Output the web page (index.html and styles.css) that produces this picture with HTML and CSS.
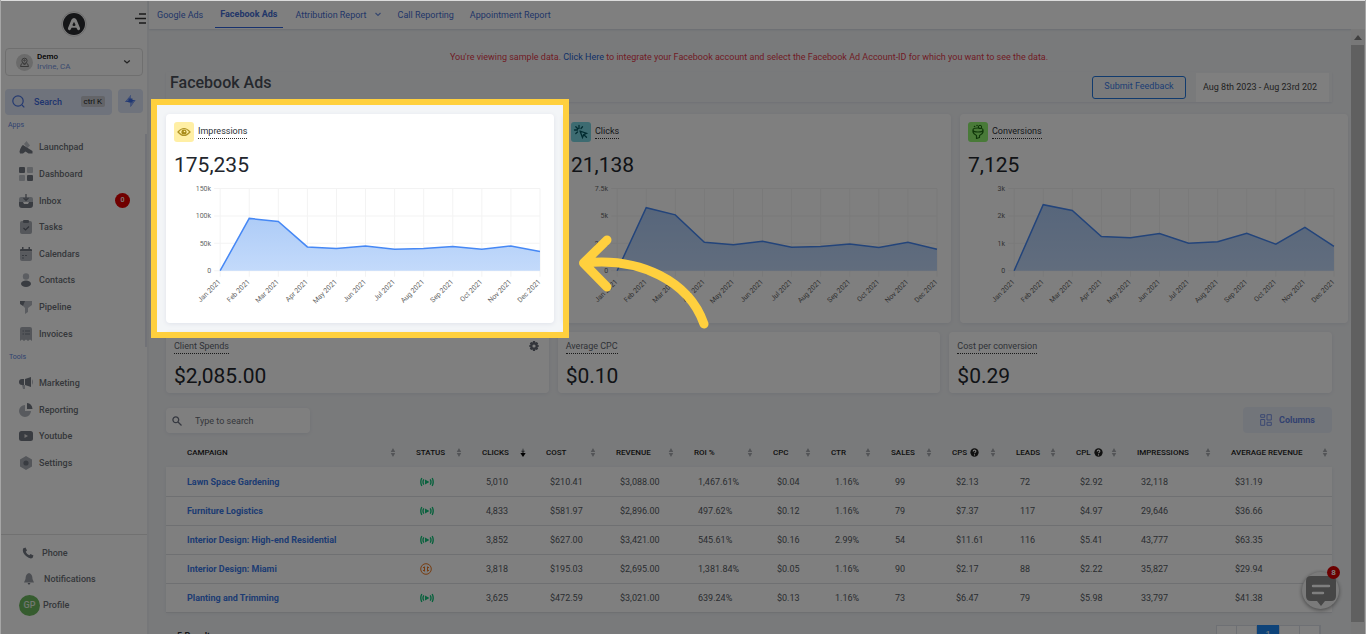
FILE: index.html
```html
<!DOCTYPE html>
<html lang="en">
<head>
<meta charset="utf-8">
<title>Facebook Ads</title>
<link rel="stylesheet" href="styles.css">
</head>
<body>
<svg class="defs" aria-hidden="true">
  <defs>
    <linearGradient id="area" x1="0" y1="0" x2="0" y2="1"><stop offset="0" stop-color="#aeccf7"/><stop offset="1" stop-color="#c3dafb"/></linearGradient>
    <symbol id="sort" viewBox="0 0 6 10"><path d="M3 0 5.500 4.500h-5zM3 10 .5 5.500h5z"/></symbol>
    <symbol id="help" viewBox="0 0 10 10"><circle cx="5" cy="5" r="4.600" fill="#222"/><path d="M3.500 3.900c0-2 3-2 3-.2 0 1.100-1.500 1.100-1.500 2.200M5 7v1.200" fill="none" stroke="#fff" stroke-width="1.200"/></symbol>
    <symbol id="live" viewBox="0 0 14 10"><path d="M5 2.500v5l4.500-2.500z" fill="#14c47c"/><path d="M3.800 2.300q-1.600 2.700 0 5.400M10.200 2.300q1.600 2.700 0 5.400M1.800 1q-2 4 0 8M12.200 1q2 4 0 8" fill="none" stroke="#14c47c" stroke-width="1.400"/></symbol>
  </defs>
</svg>
<div class="app">
  <aside class="sidebar">
    <div class="brand">
      <svg class="logo" viewBox="0 0 26 26"><circle cx="13" cy="13" r="12.300" fill="#fff" stroke="#ccc" stroke-width=".7"/><circle cx="13" cy="13" r="11" fill="#2b2c31"/><path d="M8.500 17.500 11.800 9.500q1.200-2 2.400 0l3.300 8" fill="none" stroke="#fff" stroke-width="3.200" stroke-linejoin="round" stroke-linecap="round"/><path d="M10 15.500h6" stroke="#fff" stroke-width="2.400"/><circle cx="13" cy="13.700" r="1.300" fill="#2b2c31"/></svg>
      <button class="menu" aria-label="Toggle menu"><svg viewBox="0 0 11 11"><path d="M4 1h7M0 5.500h11M4 10h7" stroke="#333" stroke-width="1.300"/></svg></button>
    </div>
    <button class="account">
      <svg class="account-pic" viewBox="0 0 17 17"><circle cx="8.500" cy="8.500" r="8.500" fill="#d6d6d6"/><g fill="none" stroke="#666" stroke-width=".9"><circle cx="8.500" cy="6.800" r="2.600"/><circle cx="8.500" cy="6.500" r=".7"/><path d="M6.500 8.800 8.500 11l2-2.200M5.500 9.500l-1 3h8l-1-3"/></g></svg>
      <span class="account-text"><b>Demo</b><span>Irvine, CA</span></span>
      <svg class="caret" viewBox="0 0 8 6"><path d="m1.200 1.500 2.800 2.500 2.800-2.500" fill="none" stroke="#444" stroke-width="1.300"/></svg>
    </button>
    <div class="quick">
      <button class="search"><svg viewBox="0 0 13 13"><circle cx="6" cy="6" r="5.200"/><path d="m10 10 2.300 2.300"/></svg><b>Search</b><kbd>ctrl K</kbd></button>
      <button class="bolt" aria-label="Quick actions"><svg viewBox="0 0 11 12"><path d="M6 0v5h4.500L5.500 12V7H0z" fill="#3f6fe6"/><path d="M6 0v5L0 7zM5.500 12V7l5-2z" fill="#8aa7f2"/><path d="M3.500 3.500h4v4h-4z" fill="#3f6fe6"/></svg></button>
    </div>
    <h2 class="group">Apps</h2>
    <ul class="nav nav-apps">
      <li><a href="#"><svg viewBox="0 0 14 14"><path d="m5 4 2.500-3L11 5.500 8.500 8z" fill="#c2c6cd"/><path d="M.5 11.500Q2 6 4 5l9.500 6v2.500h-4l-3-2-2.500 2H1z"/></svg>Launchpad</a></li>
      <li><a href="#"><svg viewBox="0 0 14 14"><rect width="6" height="6" rx="1"/><rect x="8" width="6" height="6" rx="1" fill="#c2c6cd"/><rect y="8" width="6" height="6" rx="1" fill="#c2c6cd"/><rect x="8" y="8" width="6" height="6" rx="1"/></svg>Dashboard</a></li>
      <li><a href="#"><svg viewBox="0 0 14 14"><path d="M0 5q0-2 2-2h10q2 0 2 2v3H0z" fill="#b5bac2"/><path d="M0 8h4l1 2h4l1-2h4v3q0 3-3 3H3q-3 0-3-3z"/><path d="M7 0v6M4.500 4 7 6.500 9.500 4" fill="none" stroke="#6b707b" stroke-width="1.200"/></svg>Inbox<span class="count">0</span></a></li>
      <li><a href="#"><svg viewBox="0 0 14 14"><rect x="1" y="1" width="12" height="13" rx="2" fill="#aaaeb6"/><rect x="4" width="6" height="3" rx="1"/><path d="m4.500 8 2 2 3.500-3.500" fill="none" stroke="#5f646f" stroke-width="1.200"/></svg>Tasks</a></li>
      <li><a href="#"><svg viewBox="0 0 14 14"><path d="M1 5h12v7q0 2-2 2H3q-2 0-2-2z" fill="#b0b4bc"/><path d="M1 4.500V3q0-1 1-1h1V0h1.500v2h5V0H11v2h1q1 0 1 1v1.500zM3 8h2v1H3zM6 8h2v1H6zM3 10.500h2v1H3z"/></svg>Calendars</a></li>
      <li><a href="#"><svg viewBox="0 0 14 14"><circle cx="7" cy="3.500" r="3.200" fill="#b8bcc4"/><ellipse cx="7" cy="10.700" rx="5" ry="3.200"/></svg>Contacts</a></li>
      <li><a href="#"><svg viewBox="0 0 14 14"><path d="M4 1h9v4L9 8v4l-3 2V8L4 6z" fill="#b5b9c1"/><path d="M1 1h5L4 6 1 4z"/></svg>Pipeline</a></li>
      <li><a href="#"><svg viewBox="0 0 14 14"><path d="M1 2q0-2 2-2h8q2 0 2 2v12l-2-1.500L9 14l-2-1.500L5 14l-2-1.500L1 14z" fill="#a9adb5"/><path d="M3.500 3.500H5v1H3.500zM6 3.500h5v1H6zM3.500 6.500H5v1H3.500zM6 6.500h5v1H6z"/></svg>Invoices</a></li>
    </ul>
    <h2 class="group">Tools</h2>
    <ul class="nav nav-tools">
      <li><a href="#"><svg viewBox="0 0 14 14"><path d="M6 3 12 1v10L6 9z"/><path d="M0 6q0-3 3-3h2v6H3Q0 9 0 6z"/><path d="M3 9h3v4H4zM13 3q2 3 0 6" fill="#b5b9c1"/></svg>Marketing</a></li>
      <li><a href="#"><svg viewBox="0 0 14 14"><path d="M6 2v6h6a6 6 0 1 1-6-6z" fill="#b0b4bc"/><path d="M8 0q5 .500 5.500 6H8z"/></svg>Reporting</a></li>
      <li><a href="#"><svg viewBox="0 0 14 14"><rect y="2" width="14" height="10" rx="2.500"/><path d="m5.500 5 3.500 2-3.500 2z" fill="#ddd"/></svg>Youtube</a></li>
      <li><a href="#"><svg viewBox="0 0 14 14"><path d="m7 0 6 3.500v7L7 14l-6-3.500v-7z" fill="#a9adb5"/><circle cx="7" cy="7" r="2.600"/></svg>Settings</a></li>
    </ul>
    <ul class="nav nav-user">
      <li><a href="#"><svg viewBox="0 0 12 12"><path d="M1 1.500 3.500.5l1.500 3-1.300 1.200q1 2.400 3.600 3.600L8.500 7l3 1.500-1 2.500Q8 12.500 4 9T1 1.500z"/></svg>Phone</a></li>
      <li><a class="wide" href="#"><svg viewBox="0 0 12 12"><path d="M6 0q3.500 1 3.500 6l1.500 3.500H1L2.500 6Q2.500 1 6 0z" fill="#999da5"/><path d="M4.500 10h3L6 12z"/></svg>Notifications</a></li>
      <li><a class="profile" href="#"><span class="avatar">GP</span>Profile</a></li>
    </ul>
  </aside>

  <div class="main">
    <nav class="tabs">
      <a href="#">Google Ads</a>
      <a href="#" class="active">Facebook Ads</a>
      <a href="#">Attribution Report <svg viewBox="0 0 8 6"><path d="m1.500 1 2.500 2.500 2.500-2.500" fill="none" stroke="#6f90de" stroke-width="1.200"/></svg></a>
      <a href="#">Call Reporting</a>
      <a href="#">Appointment Report</a>
    </nav>
    <div class="scroller">
      <main class="content">
        <p class="notice">You're viewing sample data. <a href="#">Click Here</a> to integrate your Facebook account and select the Facebook Ad Account-ID for which you want to see the data.</p>
        <header class="title-bar">
          <h1>Facebook Ads</h1>
          <button class="feedback">Submit Feedback</button>
          <input class="dates" type="text" aria-label="Date range" value="Aug 8th 2023 - Aug 23rd 202">
        </header>

        <section class="charts">
          <article class="card chart-card">
            <h3><svg class="badge yellow" viewBox="0 0 20 20"><path d="M4 10q6-7 12 0-6 7-12 0z" fill="none" stroke="#b09425" stroke-width="1.200"/><circle cx="10" cy="10" r="2.600" fill="#a88b1a"/><circle cx="10.500" cy="9.500" r=".8" fill="#fff0a8"/></svg><span>Impressions</span></h3>
            <p class="value">175,235</p>
            <svg class="chart" viewBox="0 0 370 130" data-ticks="0,50k,100k,150k" data-max="150" data-values="0,95.5,90,43.5,40.5,45.3,39.3,40.5,44.2,39.3,45.3,35"></svg>
            <div class="spotlight"></div>
            <svg class="arrow" viewBox="574 230 140 104"><path d="M607 240 583.500 263 607 287M584 263C640 257 689 281 704 324"/></svg>
          </article>
          <article class="card chart-card">
            <h3><svg class="badge teal" viewBox="0 0 20 20"><path d="m9 9 6.500 2.400-2.700 1.200 2.700 2.700M9 9l2.500 6.500 1.200-2.700M8 3.500v3M3.500 8h3M4.800 4.800l2 2M11.500 4.800 10 6.500M4.800 11.500l1.700-1.500" fill="none" stroke="#075863" stroke-width="1.300" stroke-linecap="round"/></svg><span>Clicks</span></h3>
            <p class="value">21,138</p>
            <svg class="chart" viewBox="0 0 370 130" data-ticks="0,2.5k,5k,7.5k" data-max="7.5" data-values="0,5.75,5.1,2.6,2.36,2.7,2.15,2.2,2.45,2.13,2.6,1.97"></svg>
          </article>
          <article class="card chart-card">
            <h3><svg class="badge green" viewBox="0 0 20 20"><path d="M5 8q0-2 5-2t5 2-5 2-5-2v2q.5 2 3.500 3.500v3l3-1V13.500Q14.500 12 15 10V8" fill="none" stroke="#1d6a10" stroke-width="1.200" stroke-linejoin="round"/><circle cx="12" cy="5" r="1.700" fill="none" stroke="#1d6a10"/><path d="M6.500 4.500h.1M9 3.500h.1" stroke="#1d6a10" stroke-width="1.500" stroke-linecap="round"/></svg><span>Conversions</span></h3>
            <p class="value">7,125</p>
            <svg class="chart" viewBox="0 0 370 130" data-ticks="0,1k,2k,3k" data-max="3" data-values="0,2.41,2.2,1.25,1.2,1.36,1,1.06,1.37,0.97,1.58,0.89"></svg>
          </article>
        </section>

        <section class="stats">
          <article class="card stat"><h3><span>Client Spends</span><button aria-label="Edit client spends"><svg viewBox="0 0 10 10"><path d="M4 0h2l.4 1.500 1.500-.6L9.200 2.400 8.400 4 10 4.500v1L8.400 6l.8 1.600-1.300 1.500-1.500-.6L6 10H4l-.4-1.500-1.500.6L.8 7.600 1.600 6 0 5.500v-1L1.600 4 .8 2.400 2.100.9l1.500.6zM5 3.400a1.600 1.600 0 1 0 0 3.200 1.600 1.600 0 1 0 0-3.200z" fill="#666b76" fill-rule="evenodd"/></svg></button></h3><p class="value">$2,085.00</p></article>
          <article class="card stat"><h3><span>Average CPC</span></h3><p class="value">$0.10</p></article>
          <article class="card stat"><h3><span>Cost per conversion</span></h3><p class="value">$0.29</p></article>
        </section>

        <div class="toolbar">
          <label class="filter card"><svg viewBox="0 0 10 10"><circle cx="3.800" cy="3.800" r="2.900"/><path d="m6 6 3.500 3.500"/></svg><input type="text" placeholder="Type to search" aria-label="Type to search"></label>
          <button class="columns"><svg viewBox="0 0 12 12"><path d="M.7.700h4v2.600h-4zM.7 5.500h4v5.800h-4zM7 .7h4.300v5.300H7zM7 8.300h4.300v3H7z"/></svg>Columns</button>
        </div>

        <table class="campaigns">
          <colgroup><col class="w238"><col class="w66"><col class="w64"><col class="w70"><col class="w78"><col class="w79"><col class="w58"><col class="w60"><col class="w61"><col class="w64"><col class="w60"><col class="w61"><col class="w94"><col class="w113"></colgroup>
          <thead><tr>
            <th><div>Campaign<svg><use href="#sort"/></svg></div></th>
            <th><div>Status<svg><use href="#sort"/></svg></div></th>
            <th><div>Clicks<svg viewBox="0 0 6 10"><path d="M3 0 5.500 4.500h-5z"/><path d="M3 10 0 5.500h6z" fill="#000"/><path d="M2.500 3h1v3h-1z" fill="#000"/></svg></div></th>
            <th><div>Cost<svg><use href="#sort"/></svg></div></th>
            <th><div>Revenue<svg><use href="#sort"/></svg></div></th>
            <th><div>ROI %<svg><use href="#sort"/></svg></div></th>
            <th><div>CPC<svg><use href="#sort"/></svg></div></th>
            <th><div>CTR<svg><use href="#sort"/></svg></div></th>
            <th><div>Sales<svg><use href="#sort"/></svg></div></th>
            <th><div>CPS<svg class="help"><use href="#help"/></svg><svg><use href="#sort"/></svg></div></th>
            <th><div>Leads<svg><use href="#sort"/></svg></div></th>
            <th><div>CPL<svg class="help"><use href="#help"/></svg><svg><use href="#sort"/></svg></div></th>
            <th><div>Impressions<svg><use href="#sort"/></svg></div></th>
            <th class="last"><div>Average Revenue<svg><use href="#sort"/></svg></div></th>
          </tr></thead>
          <tbody>
            <tr><td><a href="#">Lawn Space Gardening</a></td><td><svg class="state" role="img" aria-label="Active"><use href="#live"/></svg></td><td>5,010</td><td>$210.41</td><td>$3,088.00</td><td>1,467.61%</td><td>$0.04</td><td>1.16%</td><td>99</td><td>$2.13</td><td>72</td><td>$2.92</td><td>32,118</td><td>$31.19</td></tr>
            <tr><td><a href="#">Furniture Logistics</a></td><td><svg class="state" role="img" aria-label="Active"><use href="#live"/></svg></td><td>4,833</td><td>$581.97</td><td>$2,896.00</td><td>497.62%</td><td>$0.12</td><td>1.16%</td><td>79</td><td>$7.37</td><td>117</td><td>$4.97</td><td>29,646</td><td>$36.66</td></tr>
            <tr><td><a href="#">Interior Design: High-end Residential</a></td><td><svg class="state" role="img" aria-label="Active"><use href="#live"/></svg></td><td>3,852</td><td>$627.00</td><td>$3,421.00</td><td>545.61%</td><td>$0.16</td><td>2.99%</td><td>54</td><td>$11.61</td><td>116</td><td>$5.41</td><td>43,777</td><td>$63.35</td></tr>
            <tr><td><a href="#">Interior Design: Miami</a></td><td><svg class="state paused" role="img" aria-label="Paused" viewBox="0 0 12 12"><circle cx="6" cy="6" r="5.300"/><path d="M4.500 3.500v5M7.500 3.500v5M3 4.500h1.500M3 7.500h1.500M7.500 4.500H9M7.500 7.500H9"/></svg></td><td>3,818</td><td>$195.03</td><td>$2,695.00</td><td>1,381.84%</td><td>$0.05</td><td>1.16%</td><td>90</td><td>$2.17</td><td>88</td><td>$2.22</td><td>35,827</td><td>$29.94</td></tr>
            <tr><td><a href="#">Planting and Trimming</a></td><td><svg class="state" role="img" aria-label="Active"><use href="#live"/></svg></td><td>3,625</td><td>$472.59</td><td>$3,021.00</td><td>639.24%</td><td>$0.13</td><td>1.16%</td><td>73</td><td>$6.47</td><td>79</td><td>$5.98</td><td>33,797</td><td>$41.38</td></tr>
          </tbody>
        </table>

        <footer class="foot">
          <span>5 Results</span>
          <nav class="pages" aria-label="Pages"><a href="#" aria-label="First"></a><a href="#" aria-label="Previous"></a><a href="#" class="current">1</a><a href="#" aria-label="Next"></a><a href="#" aria-label="Last"></a></nav>
        </footer>
      </main>
      <div class="scrollbar"><svg viewBox="0 0 8 5"><path d="M4 0 8 5H0z" fill="#808080"/></svg><div class="thumb"></div></div>
    </div>
  </div>
  <button class="chat" aria-label="Chat"><svg viewBox="0 0 32 32"><path d="M6 1h20q5 0 5 5v15q0 5-5 5h-6l-4 5-4-5H6q-5 0-5-5V6q0-5 5-5z" fill="#8c8c8c"/><path d="M8 11h16M8 18h10" stroke="#fff" stroke-width="2.400" stroke-linecap="round"/></svg><span>8</span></button>
</div>
<script src="charts.js"></script>
</body>
</html>
```
FILE: styles.css
```css
* { box-sizing: border-box; }
body { margin: 0; background: #a6a6a6; color: #2b2f36; font: 9px/12px Roboto, "Liberation Sans", sans-serif; overflow: hidden; }
h1, h2, h3, p, ul { margin: 0; padding: 0; font-weight: 400; }
ul { list-style: none; }
a { color: inherit; text-decoration: none; }
button, input { font: inherit; color: inherit; margin: 0; padding: 0; border: 0; background: none; }
svg { display: block; flex: none; overflow: visible; }
.defs { position: absolute; width: 0; height: 0; }

.app { position: relative; display: flex; height: 100vh; margin: 0 1px; overflow: hidden; background: #f3f5f7; border-top: 1px solid #dcdcdc; }

/* Sidebar */
.sidebar { display: flex; flex-direction: column; flex: none; width: 148px; background: #fff; border-right: 2px solid #edeff3; }
.brand { display: flex; justify-content: flex-end; padding: 10px 1px 0 0; }
.logo { width: 26px; height: 26px; margin-right: 48px; }
.menu { width: 11px; height: 11px; margin-top: 2px; }
.menu svg { width: 11px; }
.account { display: flex; align-items: center; gap: 4px; height: 28px; margin: 11px 4px 0; padding: 0 11px 0 10px; border: 1px solid #dedede; border-radius: 4px; text-align: left; }
.account-pic { width: 17px; }
.account-text { flex: 1; line-height: 10px; font-size: 8px; }
.account-text b { display: block; color: #000; font-weight: 500; }
.account-text span { color: #7594e0; }
.caret { width: 8px; }
.quick { display: flex; gap: 6px; padding: 13px 4px 0; }
.search { display: flex; flex: 1; align-items: center; height: 26px; padding: 0 7px 1px; border-radius: 4px; background: #dee6f8; color: #3f6ade; }
.search svg { width: 13px; fill: none; stroke: #4a74e0; stroke-width: 1.2; }
.search b { flex: 1; padding-left: 9px; text-align: left; font-weight: 500; }
.search kbd { padding: 0 3px; border-radius: 2px; background: #c6c9d1; color: #222; font: 8px/11px Roboto, sans-serif; }
.bolt { display: grid; place-items: center; width: 25px; height: 24px; border-radius: 4px; background: #dee6f8; }
.bolt svg { width: 11px; }
.group { padding: 5px 0 0 7px; color: #6286df; font-size: 7px; line-height: 10px; }
.nav-apps + .group { padding-left: 8px; }
.nav { display: flex; flex-direction: column; }
.nav li { display: flex; flex: 1; }
.nav a { display: flex; flex: 1; align-items: center; gap: 6px; padding-left: 18px; color: #6b6f76; font-weight: 500; }
.nav svg { width: 14px; height: 14px; fill: #737883; }
.nav-apps { min-height: 213px; margin-top: 4px; border-right: 2px solid #e2e5ee; }
.nav-tools { min-height: 106px; margin-top: 8px; }
.count { margin-left: auto; margin-right: 15px; width: 15px; border-radius: 50%; background: #e00000; color: #fff; font-size: 7px; line-height: 15px; text-align: center; }
.nav-user { min-height: 100px; margin-top: auto; padding: 5px 0 16px; border-top: 1px solid #e2e2e2; }
.nav-user a { gap: 8px; padding-left: 21px; }
.nav-user svg { width: 12px; height: 12px; }
.nav-user .wide { gap: 9px; padding-left: 22px; }
.nav-user .profile { gap: 3px; padding-left: 18px; }
.avatar { width: 21px; border-radius: 50%; background: #6db95f; color: #e4efe2; line-height: 21px; text-align: center; }

/* Top tabs */
.main { display: flex; flex: 1; flex-direction: column; min-width: 0; }
.tabs { display: flex; flex: none; gap: 12px; height: 28px; padding: 0 8px; background: #fff; color: #456dd2; box-shadow: 0 1px 2px #d3d8e2; }
.tabs a { display: flex; align-items: center; gap: 7px; height: 27px; }
.tabs a + a { margin-right: 4px; }
.tabs svg { width: 8px; }
.tabs .active { margin-right: 0; padding: 0 6px 0 5px; border-bottom: 1px solid #2e63dd; font-weight: 700; }
.scroller { display: flex; flex: 1; }
.content { flex: 1; min-width: 0; padding: 22px 19px 0 17px; }
.notice { color: #e2394a; text-align: center; }
.notice a { color: #1f5fd0; }
.title-bar { display: flex; align-items: center; gap: 10px; height: 30px; margin-top: 9px; padding: 0 3px 0 4px; box-shadow: 0 1px 2px #dde1e9; }
.title-bar h1 { flex: 1; align-self: flex-start; color: #4b515b; font-size: 16px; font-weight: 500; line-height: 22px; }
.feedback { width: 94px; height: 23px; padding-bottom: 2px; border: 1px solid #2277dd; border-radius: 3px; color: #3b7dea; }
.dates { width: 133px; height: 29px; padding: 0 7px; background: #fff; color: #444; }

/* Cards */
.card { background: #fff; border-radius: 4px; box-shadow: 0 1px 4px #dfe3ea; }
.card h3 { font-size: 9px; }
.card h3 span { border-bottom: 1px dotted #333; line-height: 13px; }
.charts, .stats { display: grid; grid-template-columns: repeat(3, 1fr); gap: 9px; }
.charts { margin: 12px -16px 9px 0; }
.chart-card { position: relative; padding: 8px 9px 13px 8px; }
.chart-card h3 { display: flex; align-items: center; gap: 4px; }
.badge { width: 20px; height: 20px; border-radius: 3px; }
.yellow { background: #ffefa5; }
.teal { background: #7ad7e2; }
.green { background: #92f571; }
.value { color: #22262d; font-size: 21px; line-height: 26px; }
.chart-card .value { margin: 10px 0 2px; }
.chart { width: 100%; }
.chart text { fill: #666; font-size: 7px; text-anchor: end; }
.grid { stroke: #f3f3f3; }
.line { fill: none; stroke: #4688f5; stroke-width: 1.5; }
.spotlight { position: absolute; z-index: 5; inset: -15px; border: 6px solid #ffd03e; box-shadow: 0 0 0 2000px rgba(0, 0, 0, .5); pointer-events: none; }
.arrow { position: absolute; z-index: 6; top: 116px; left: calc(100% + 20px); width: 140px; fill: none; stroke: #ffd03e; stroke-width: 9; stroke-linecap: round; stroke-linejoin: round; pointer-events: none; }
.stat { padding: 8px 8px 4px; }
.stat h3 { display: flex; justify-content: space-between; height: 14px; color: #61666f; }
.stat .value { margin-top: 9px; }
.stat button { width: 10px; height: 10px; margin: 1px 2px 0 0; }

/* Toolbar and table */
.toolbar { display: flex; justify-content: space-between; margin: 14px 0 2px; }
.filter { display: flex; align-items: center; gap: 13px; width: 144px; height: 25px; margin-top: 1px; padding: 0 6px; }
.filter svg { width: 10px; fill: none; stroke: #6b7180; stroke-width: 1.3; }
.filter input { flex: 1; min-width: 0; }
.filter input::placeholder { color: #6b6f77; opacity: 1; }
.columns { display: flex; align-items: center; justify-content: center; gap: 7px; width: 89px; height: 26px; border-radius: 4px; background: #e5eaf5; color: #6583e0; font-weight: 700; }
.columns svg { width: 12px; fill: none; stroke: #7690e3; }
.campaigns { width: 100%; table-layout: fixed; border-collapse: collapse; white-space: nowrap; }
.campaigns th { height: 32px; padding: 3px 8px 0 12px; color: #222; font-size: 8px; font-weight: 500; text-transform: uppercase; }
.campaigns th.last { padding-right: 4px; }
.campaigns th:first-child, .campaigns td:first-child { padding-left: 21px; }
.campaigns th div { display: flex; align-items: center; gap: 3px; }
.campaigns th svg { width: 6px; height: 9px; margin-left: auto; fill: #a6a9af; }
.campaigns th .help { width: 9px; margin-left: 0; }
.campaigns tbody { background: #fff; box-shadow: 0 1px 4px #dfe3ea; }
.campaigns td { height: 29px; padding: 0 0 0 16px; border-bottom: 1px solid #dee0e4; color: #555a62; }
.campaigns td a { color: #3b78e6; font-weight: 700; }
.state { width: 14px; height: 10px; }
.paused { width: 12px; height: 12px; fill: none; stroke: #ee7b25; }
.w238 { width: 238px; } .w66 { width: 66px; } .w64 { width: 64px; } .w70 { width: 70px; } .w78 { width: 78px; }
.w79 { width: 79px; } .w58 { width: 58px; } .w60 { width: 60px; } .w61 { width: 61px; } .w94 { width: 94px; } .w113 { width: 113px; }
.foot { display: flex; justify-content: space-between; padding: 12px 11px 0; }
.foot > span { padding-top: 5px; font-weight: 700; }
.pages { display: flex; height: 23px; border: 1px solid #dde1e9; background: #fff; text-align: center; line-height: 21px; }
.pages a { width: 20px; border-right: 1px solid #dde1e9; color: #3b64cf; }
.pages .current { width: 23px; margin-top: -1px; background: #1c87f2; color: #fff; }

/* Scrollbar and chat launcher */
.scrollbar { width: 14px; padding: 6px 1px 26px 0; display: flex; flex-direction: column; align-items: center; gap: 5px; background: #f1f1f1; }
.scrollbar svg { width: 8px; }
.thumb { flex: 1; width: 13px; background: #c1c1c1; }
.chat { position: absolute; right: 26px; bottom: 25px; display: grid; place-items: center; width: 37px; height: 37px; border-radius: 50%; background: #f4f4f4; box-shadow: 0 1px 4px #888; }
.chat svg { width: 32px; }
.chat span { position: absolute; top: -6px; right: -1px; width: 13px; border-radius: 50%; background: #d80000; color: #fff; font-size: 8px; font-weight: 700; line-height: 13px; }
```
FILE: charts.js
```js
const months = ["Jan", "Feb", "Mar", "Apr", "May", "Jun", "Jul", "Aug", "Sep", "Oct", "Nov", "Dec"];
const left = 46, right = 365, top_ = 8.5, bottom = 90.5;

document.querySelectorAll(".chart").forEach(svg => {
  const values = svg.dataset.values.split(",").map(Number);
  const ticks = svg.dataset.ticks.split(",");
  const x = i => left + (right - left) * i / 11;
  const y = v => bottom - (bottom - top_) * v / svg.dataset.max;
  let out = "";
  ticks.forEach((t, i) => {
    const ty = bottom - (bottom - top_) * i / 3;
    out += `<path class="grid" d="M${left - 6} ${ty}H${right}"/><text x="37" y="${ty + 2.5}">${t}</text>`;
  });
  months.forEach((m, i) => {
    out += `<path class="grid" d="M${x(i)} ${top_}V${bottom + 6}"/><text transform="translate(${x(i) + 1} 102) rotate(-45)">${m} 2021</text>`;
  });
  const line = values.map((v, i) => `${x(i)} ${y(v)}`).join("L");
  out += `<path d="M${line}V${bottom}H${left}z" fill="url(#area)"/><path class="line" d="M${line}"/>`;
  svg.innerHTML = out;
});
```
